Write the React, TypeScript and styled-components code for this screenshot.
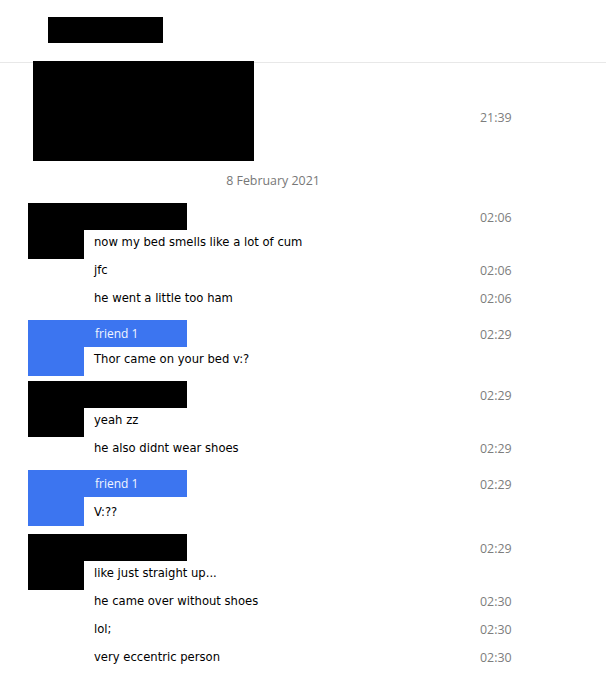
import { FC } from 'react';
import styled, { createGlobalStyle } from 'styled-components';

const GlobalStyle = createGlobalStyle`
  body {
    margin: 0;
    background: #ffffff;
    font-family: 'Open Sans', 'Liberation Sans', sans-serif;
  }
`;

interface IMessage {
  text: string;
  time: string;
}

interface IGroup {
  name?: string;
  time: string;
  offset?: number;
  messages: IMessage[];
}

const groups: IGroup[] = [
  {
    time: '02:06',
    messages: [
      { text: 'now my bed smells like a lot of cum', time: '' },
      { text: 'jfc', time: '02:06' },
      { text: 'he went a little too ham', time: '02:06' },
    ],
  },
  {
    name: 'friend 1',
    time: '02:29',
    messages: [{ text: 'Thor came on your bed v:?', time: '' }],
  },
  {
    time: '02:29',
    messages: [
      { text: 'yeah zz', time: '' },
      { text: 'he also didnt wear shoes', time: '02:29' },
    ],
  },
  {
    name: 'friend 1',
    time: '02:29',
    offset: 3,
    messages: [{ text: 'V:??', time: '' }],
  },
  {
    time: '02:29',
    messages: [
      { text: 'like just straight up...', time: '' },
      { text: 'he came over without shoes', time: '02:30' },
      { text: 'lol;', time: '02:30' },
      { text: 'very eccentric person', time: '02:30' },
    ],
  },
];

const Group: FC<{ group: IGroup }> = ({ group }) => (
  <SGroup $offset={group.offset ?? 0}>
    <SNameBar $friend={!!group.name}>{group.name}</SNameBar>
    <SHeadTime>{group.time}</SHeadTime>
    <SAvatar $friend={!!group.name} />
    {group.messages.map((m, i) => (
      <SRow key={i}>
        <SText>{m.text}</SText>
        <STime>{m.time}</STime>
      </SRow>
    ))}
  </SGroup>
);

const App: FC = () => (
  <>
    <GlobalStyle />
    <SHeader>
      <SRedacted $w={115} $h={26} />
    </SHeader>
    <SMediaRow>
      <SRedacted $w={221} $h={100} />
      <SMediaTime>21:39</SMediaTime>
    </SMediaRow>
    <SDate>8 February 2021</SDate>
    <SHistory>
      {groups.map((g, i) => (
        <Group key={i} group={g} />
      ))}
    </SHistory>
  </>
);

export default App;

const SHeader = styled.div`
  height: 63px;
  padding: 17px 0 0 48px;
  box-sizing: border-box;
  border-bottom: 1px solid #e8e8e8;
`;

const SRedacted = styled.div<{ $w: number; $h: number }>`
  width: ${(p) => p.$w}px;
  height: ${(p) => p.$h}px;
  background: #000;
`;

const SMediaRow = styled.div`
  display: grid;
  grid-template-columns: 1fr 93px;
  align-items: center;
  margin-top: -2px;
  padding: 0 33px 0 33px;
`;

const SMediaTime = styled.div`
  font-size: 12.4px;
  color: #7d7d7d;
  padding-top: 13px;
`;

const SDate = styled.div`
  padding: 11px 60px 0 0;
  text-align: center;
  font-size: 12.4px;
  color: #777;
  line-height: 18px;
`;

const SHistory = styled.div`
  display: flex;
  flex-direction: column;
  gap: 5px;
  padding: 13px 33px 0 28px;
`;

const SGroup = styled.div<{ $offset: number }>`
  display: grid;
  grid-template-columns: 56px 10px 93px 1fr 93px;
  grid-template-rows: ${(p) => 27 + p.$offset}px;
  grid-auto-rows: 28px;
  padding-bottom: 1px;
`;

const SNameBar = styled.div<{ $friend: boolean }>`
  grid-column: 1 / 4;
  grid-row: 1;
  align-self: start;
  height: 27px;
  background: ${(p) => (p.$friend ? '#3c75f0' : '#000')};
  color: #f2f5ff;
  font-size: 12px;
  line-height: 27px;
  padding-left: 67px;
  box-sizing: border-box;
`;

const SHeadTime = styled.div`
  grid-column: 5;
  grid-row: 1;
  align-self: start;
  font-size: 12.4px;
  color: #7d7d7d;
  line-height: 27px;
  padding-top: 1px;
`;

const SAvatar = styled.div<{ $friend: boolean }>`
  grid-column: 1;
  grid-row: 1 / 3;
  align-self: start;
  margin-top: 27px;
  height: 29px;
  background: ${(p) => (p.$friend ? '#3c75f0' : '#000')};
`;

const SRow = styled.div`
  grid-column: 3 / 6;
  display: grid;
  grid-template-columns: 1fr 93px;
  align-items: center;
  margin-top: -2px;
  height: 28px;
`;

const SText = styled.div`
  font-family: 'DejaVu Sans', sans-serif;
  font-size: 11.6px;
  color: #000;
`;

const STime = styled.div`
  font-size: 12.4px;
  color: #7d7d7d;
`;
